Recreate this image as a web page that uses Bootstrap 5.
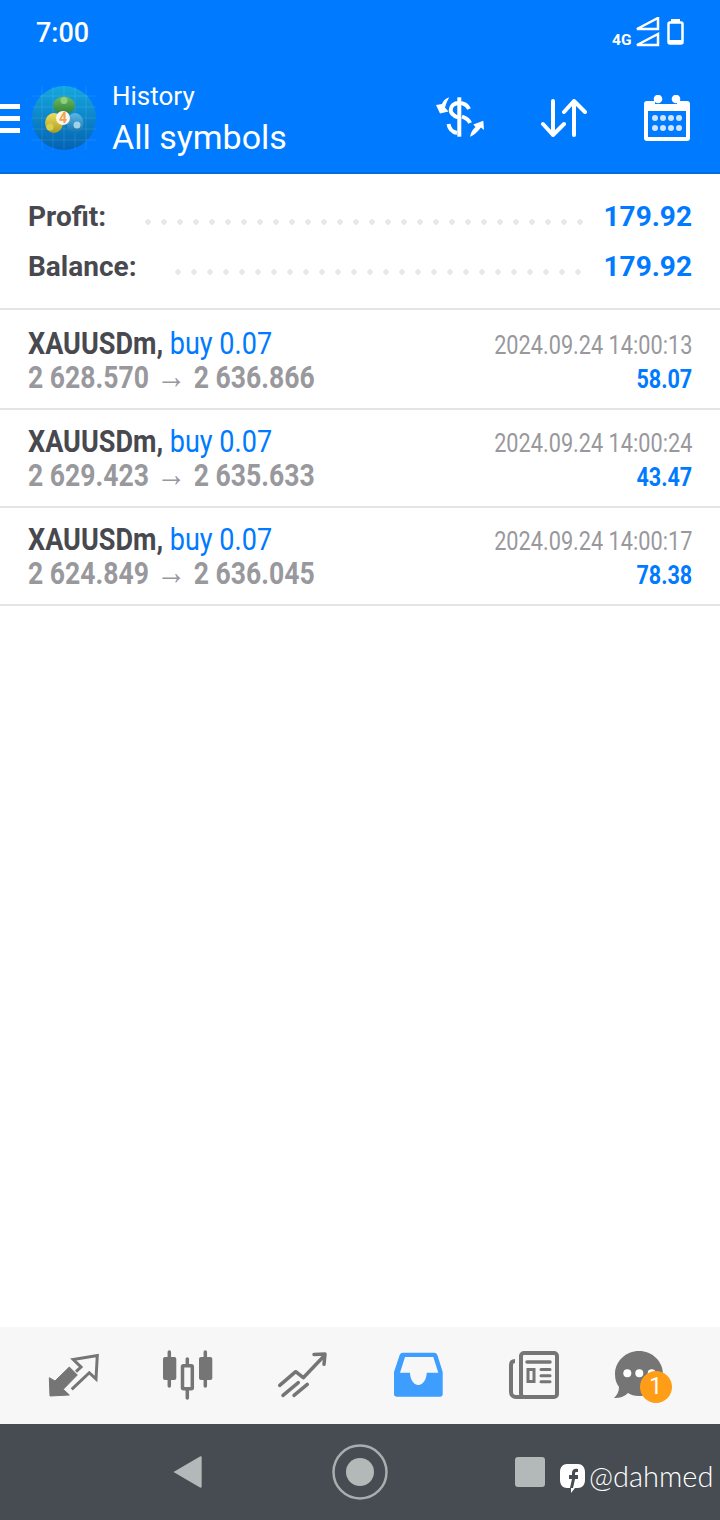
<!DOCTYPE html>
<html lang="en">
<head>
  <meta charset="UTF-8" />
  <meta name="viewport" content="width=device-width, initial-scale=1.0"/>
  <title>History</title>
  <link href="https://cdn.jsdelivr.net/npm/bootstrap@5.3.3/dist/css/bootstrap.min.css" rel="stylesheet">
  <style>
    html, body { height: 100%; }
    body {
      background: #fff;
      font-family: Roboto, "Noto Sans", sans-serif;
      color: #48484f;
      width: 720px;
      height: 1520px;
      overflow: hidden;
    }
    svg { display: block; flex: none; }
    .app-head { background: #007aff; border-bottom: 2px solid #006edc; height: 174px; color: #fff; }
    .status-row { height: 64px; padding: 0 36px 0 36px; }
    .status-time { font-size: 27px; font-weight: 500; line-height: 1; margin-top: 3px; }
    .status-icons { margin-top: 4px; }
    .tool-row { height: 108px; }
    .burger { width: 20px; margin-right: 12px; }
    .burger i { display: block; height: 5px; background: #fff; margin-bottom: 7px; }
    .burger i:last-child { margin-bottom: 0; }
    .head-titles { margin-left: 16px; margin-top: 2px; }
    .head-sub { font-size: 26px; line-height: 36px; }
    .head-main { font-size: 34px; line-height: 46px; }
    .tool-gap-1 { margin-left: 56px; }
    .tool-gap-2 { margin-left: 57px; margin-right: 30px; }

    .sum-box { height: 136px; padding: 18px 28px 0; border-bottom: 2px solid #e4e4e4; }
    .sum-line { height: 50px; font-size: 28px; font-weight: 700; }
    .sum-val { color: #007aff; font-size: 28px; font-weight: 700; }
    .dot-fill {
      height: 6px;
      margin-top: 10px;
      background: radial-gradient(circle, #e8e8e8 2.5px, transparent 3px) repeat-x;
      background-size: 16px 6px;
      margin-left: auto;
    }
    .dots-profit { width: 448px; margin-right: 16px; }
    .dots-balance { width: 416px; margin-right: 18px; }

    .deal-row { height: 98px; padding: 14px 28px 0; border-bottom: 2px solid #e4e4e4; }
    .deal-row.first { height: 100px; padding-top: 16px; }
    .deal-side { padding-top: 2px; }
    .deal-line { height: 34px; line-height: 34px; white-space: nowrap; }
    .narrow { display: inline-block; transform-origin: left center; }
    .narrow-r { display: inline-block; transform-origin: right center; }
    .deal-name { font-size: 32px; font-weight: 700; transform: scaleX(.845); }
    .deal-name b { font-weight: 700; }
    .deal-name span { color: #007aff; font-weight: 400; }
    .deal-price { font-size: 32px; font-weight: 700; color: #98989d; transform: scaleX(.83); }
    .deal-arrow { font-weight: 400; font-size: 36px; line-height: 0; margin: 0 1px; }
    .deal-date { font-size: 26px; color: #98989d; transform: scaleX(.835); }
    .deal-val { font-size: 26px; font-weight: 700; color: #007aff; transform: scaleX(.83); }

    .tab-bar { height: 97px; background: #f7f7f7; padding: 0 13px 0 15px; }
    .tab-cell { height: 97px; position: relative; }
    .chat-bubble { margin-right: 20px; }
    .chat-count {
      position: absolute; left: 48px; top: 44px;
      width: 32px; height: 32px; border-radius: 50%;
      background: #ff9d17; color: #fff;
      font-size: 23px; line-height: 32px; text-align: center;
    }
    .sys-bar { height: 96px; background: #464c52; padding-left: 172px; }
    .sys-gap-1 { margin-left: 128px; }
    .sys-gap-2 { margin-left: 125px; }
    .sys-gap-3 { margin-left: 15px; margin-top: 12px; }
    .sys-tag { color: #fff; font-family: Lato, sans-serif; font-weight: 300; font-size: 29px; margin-left: 4px; margin-top: 6px; line-height: 1; white-space: nowrap; }
  </style>
</head>
<body>
<div class="d-flex flex-column h-100">

  <!-- Header -->
  <header class="app-head">
    <div class="status-row d-flex align-items-center justify-content-between">
      <span class="status-time">7:00</span>
      <svg class="status-icons" width="72" height="34" viewBox="0 0 72 34" fill="none">
        <text x="0" y="28" font-family="Roboto" font-weight="700" font-size="15.5" fill="#fff">4G</text>
        <path d="M25 12 46 1V12Z M25 28 46 17V28Z" stroke="#fff" stroke-width="2.500"/>
        <path d="M59 2h9v3h-9z" fill="#fff"/>
        <rect x="56.500" y="5.500" width="14" height="21" rx="1.500" stroke="#fff" stroke-width="2.500"/>
        <rect x="56" y="23" width="15" height="4" fill="#fff"/>
      </svg>
    </div>
    <div class="tool-row d-flex align-items-center">
      <div class="burger"><i></i><i></i><i></i></div>
      <svg width="64" height="64" viewBox="0 0 64 64">
        <defs>
          <linearGradient id="logoBg" x1="0" y1="0" x2="0" y2="1">
            <stop offset="0" stop-color="#14a8e0"/>
            <stop offset="1" stop-color="#0462b2"/>
          </linearGradient>
          <linearGradient id="logoGreen" x1="0" y1="0" x2="0" y2="1">
            <stop offset="0" stop-color="#6dbb5e"/>
            <stop offset="1" stop-color="#2f7f3a"/>
          </linearGradient>
          <linearGradient id="logoYellow" x1="0" y1="0" x2="0" y2="1">
            <stop offset="0" stop-color="#efe05a"/>
            <stop offset="1" stop-color="#a99a22"/>
          </linearGradient>
          <linearGradient id="logoBlue" x1="0" y1="0" x2="0" y2="1">
            <stop offset="0" stop-color="#5cb7e2"/>
            <stop offset="1" stop-color="#1672ad"/>
          </linearGradient>
        </defs>
        <circle cx="32" cy="32" r="32" fill="url(#logoBg)"/>
        <path d="M10 0V64M21 0V64M32 0V64M43 0V64M54 0V64M0 10H64M0 21H64M0 32H64M0 43H64M0 54H64" stroke="#fff" stroke-opacity=".1"/>
        <ellipse cx="32" cy="19.500" rx="11" ry="9" fill="url(#logoGreen)"/>
        <circle cx="32" cy="14.500" r="3.500" fill="#8ed07c"/>
        <ellipse cx="22" cy="37" rx="9" ry="10" fill="url(#logoYellow)"/>
        <circle cx="18" cy="41" r="3.500" fill="#d9cd4a"/>
        <ellipse cx="43" cy="37" rx="8.500" ry="10" fill="url(#logoBlue)"/>
        <circle cx="45" cy="39" r="3.500" fill="#9fd3ea"/>
        <circle cx="31" cy="32" r="7" fill="#fdf6ee"/>
        <text x="31" y="37" text-anchor="middle" font-family="Roboto" font-weight="700" font-size="14" fill="#f2a24a">4</text>
      </svg>
      <div class="head-titles flex-grow-1">
        <div class="head-sub">History</div>
        <div class="head-main">All symbols</div>
      </div>
      <svg width="50" height="44" viewBox="0 0 50 44" fill="none">
        <path d="M24.300 1.300V40.700" stroke="#fff" stroke-width="4"/>
        <path d="M34 13C32 8.500 28 7 24 7 19 7 15.700 10 15.700 14 15.700 18 19 20 23 21.500" stroke="#fff" stroke-width="4"/>
        <path d="M27 20.500C31 22 34 24 35 27" stroke="#fff" stroke-width="4"/>
        <path d="M13.500 28C14 32 17 36 22 37" stroke="#fff" stroke-width="4"/>
        <path d="M14.300 1.300C10 3 8 5 7 8L1 9 5 17.500 13.500 15.500 10 11.500C11 8 12 5 14.300 1.300Z" fill="#fff"/>
        <path d="M35 40.700C36 36 38 33 40.500 31L38.300 28.500 48.300 24.700 49 34 46 31.500C43 35 40 39 35 40.700Z" fill="#fff"/>
      </svg>
      <svg class="tool-gap-1" width="46" height="40" viewBox="0 0 46 40" fill="none" stroke="#fff" stroke-width="4" stroke-linecap="round" stroke-linejoin="round">
        <path d="M12 3V37M2 26 12 37 23 26"/>
        <path d="M33 37V3M23 14 33 3 44 14"/>
      </svg>
      <svg class="tool-gap-2" width="46" height="46" viewBox="0 0 46 46">
        <path d="M3 6H11V9H33V6H43A3 3 0 0 1 46 9V43A3 3 0 0 1 43 46H3A3 3 0 0 1 0 43V9A3 3 0 0 1 3 6Z" fill="#fff"/>
        <circle cx="14" cy="4" r="4.300" fill="#fff"/>
        <circle cx="32" cy="4" r="4.300" fill="#fff"/>
        <rect x="4" y="16" width="38" height="26" fill="#007aff"/>
        <g fill="#cfe4ff">
          <circle cx="11" cy="23" r="3"/><circle cx="19" cy="23" r="3"/><circle cx="27" cy="23" r="3"/><circle cx="35" cy="23" r="3"/>
          <circle cx="11" cy="33" r="3"/><circle cx="19" cy="33" r="3"/><circle cx="27" cy="33" r="3"/><circle cx="35" cy="33" r="3"/>
        </g>
      </svg>
    </div>
  </header>

  <!-- Summary -->
  <section class="sum-box">
    <div class="sum-line d-flex align-items-center">
      <span>Profit:</span><span class="dot-fill dots-profit"></span><span class="sum-val">179.92</span>
    </div>
    <div class="sum-line d-flex align-items-center">
      <span>Balance:</span><span class="dot-fill dots-balance"></span><span class="sum-val">179.92</span>
    </div>
  </section>

  <!-- Deals -->
  <main class="flex-grow-1">
    <div class="deal-row first d-flex justify-content-between">
      <div>
        <div class="deal-line"><span class="narrow deal-name"><b>XAUUSDm,</b> <span>buy 0.07</span></span></div>
        <div class="deal-line"><span class="narrow deal-price">2 628.570 <span class="deal-arrow">→</span> 2 636.866</span></div>
      </div>
      <div class="text-end deal-side">
        <div class="deal-line"><span class="narrow-r deal-date">2024.09.24 14:00:13</span></div>
        <div class="deal-line"><span class="narrow-r deal-val">58.07</span></div>
      </div>
    </div>
    <div class="deal-row d-flex justify-content-between">
      <div>
        <div class="deal-line"><span class="narrow deal-name"><b>XAUUSDm,</b> <span>buy 0.07</span></span></div>
        <div class="deal-line"><span class="narrow deal-price">2 629.423 <span class="deal-arrow">→</span> 2 635.633</span></div>
      </div>
      <div class="text-end deal-side">
        <div class="deal-line"><span class="narrow-r deal-date">2024.09.24 14:00:24</span></div>
        <div class="deal-line"><span class="narrow-r deal-val">43.47</span></div>
      </div>
    </div>
    <div class="deal-row d-flex justify-content-between">
      <div>
        <div class="deal-line"><span class="narrow deal-name"><b>XAUUSDm,</b> <span>buy 0.07</span></span></div>
        <div class="deal-line"><span class="narrow deal-price">2 624.849 <span class="deal-arrow">→</span> 2 636.045</span></div>
      </div>
      <div class="text-end deal-side">
        <div class="deal-line"><span class="narrow-r deal-date">2024.09.24 14:00:17</span></div>
        <div class="deal-line"><span class="narrow-r deal-val">78.38</span></div>
      </div>
    </div>
  </main>

  <!-- Bottom tabs -->
  <nav class="tab-bar row g-0">
    <div class="col-2 tab-cell d-flex align-items-center justify-content-center">
      <svg width="60" height="60" viewBox="0 0 60 60" fill="none">
        <path d="M7 50 6.300 31.700 12 35 26.300 21 34.300 29 20.300 43.300 26.300 49Z" fill="#757575" stroke="#757575" stroke-linejoin="round"/>
        <path d="M33 25.700 38 21 30.300 13.500 54.300 9.500 53 33 46.300 26.700 28.700 43.300" stroke="#757575" stroke-width="3"/>
      </svg>
    </div>
    <div class="col-2 tab-cell d-flex align-items-center justify-content-center">
      <svg width="60" height="60" viewBox="0 0 60 60" fill="none">
        <g stroke="#757575" stroke-width="3.500" stroke-linecap="round">
          <path d="M11.300 6V40M29.300 13V52M47.300 6V40"/>
        </g>
        <rect x="5" y="11" width="13.300" height="23" rx="2" fill="#757575"/>
        <rect x="41" y="11" width="13.300" height="23" rx="2" fill="#757575"/>
        <rect x="24.500" y="19.800" width="9.800" height="23" rx="1" fill="#f7f7f7" stroke="#757575" stroke-width="3.500"/>
      </svg>
    </div>
    <div class="col-2 tab-cell d-flex align-items-center justify-content-center">
      <svg width="60" height="60" viewBox="0 0 60 60" fill="none" stroke="#757575" stroke-width="3.500" stroke-linecap="round" stroke-linejoin="round">
        <path d="M6.700 39.300 22.700 25.700 30.300 31.700 51 10"/>
        <path d="M41 8.500 52 8 51 18.300"/>
        <path d="M10 49.300 25.300 36.700M21 49.300 34.300 38.300"/>
      </svg>
    </div>
    <div class="col-2 tab-cell d-flex align-items-center justify-content-center">
      <svg width="60" height="60" viewBox="0 0 60 60">
        <path d="M14 6.700H45C47 6.700 48 8 48.500 9.500L53.700 26V48C53.700 49.700 52.700 50.700 51 50.700H8C6 50.700 5 49.700 5 48V26L10.500 9.500C11 8 12 6.700 14 6.700Z" fill="#3d9eff"/>
        <path d="M16 11H44.300L49.300 26.700H37.700C37.700 33 34 39 29.300 39 24.700 39 21 33 21 26.700H11Z" fill="#f7f7f7"/>
      </svg>
    </div>
    <div class="col-2 tab-cell d-flex align-items-center justify-content-center">
      <svg width="60" height="60" viewBox="0 0 60 60" fill="none" stroke="#757575">
        <rect x="17" y="7" width="36" height="44" rx="3" stroke-width="4"/>
        <path d="M11 15C8 15 7 17 7 19V46C7 49 9 51 12 51H19" stroke-width="4"/>
        <path d="M23 16H46" stroke-width="3.500" stroke-linecap="round"/>
        <rect x="24" y="23.500" width="6" height="12" stroke-width="3"/>
        <path d="M37 23.500H46M37 29.700H46M37 35.700H46" stroke-width="3" stroke-linecap="round"/>
      </svg>
    </div>
    <div class="col-2 tab-cell d-flex align-items-center justify-content-center">
      <svg class="chat-bubble" width="60" height="60" viewBox="0 0 60 60">
        <path d="M30 5C43 5 54 15 54 28 54 41 43 50 30 50 25 50 22 49 19 47 15 51 11 52 5 52 8 49 10 46 10 41 7 37 6 33 6 28 6 15 17 5 30 5Z" fill="#757575"/>
        <circle cx="18.300" cy="27.300" r="4" fill="#fff"/>
        <circle cx="30.300" cy="27.300" r="4" fill="#fff"/>
        <circle cx="42.700" cy="27.300" r="4" fill="#fff"/>
      </svg>
      <span class="chat-count">1</span>
    </div>
  </nav>

  <!-- Android nav bar -->
  <footer class="sys-bar d-flex align-items-center">
    <svg width="30" height="34" viewBox="0 0 30 34">
      <path d="M1.500 17 28 1.500C29 1 29.700 1.700 29.700 2.500V31.500C29.700 32.300 29 33 28 32.500Z" fill="#b3b8b9"/>
    </svg>
    <svg class="sys-gap-1" width="60" height="60" viewBox="0 0 60 60" fill="none">
      <circle cx="30" cy="30" r="26.500" stroke="#a9adae" stroke-width="2.500"/>
      <circle cx="30" cy="30" r="14" fill="#b3b8b9"/>
    </svg>
    <svg class="sys-gap-2" width="30" height="30" viewBox="0 0 30 30">
      <rect width="30" height="30" rx="3" fill="#b3b8b9"/>
    </svg>
    <svg class="sys-gap-3" width="25" height="29" viewBox="0 0 25 29">
      <path d="M7 0H18C22 0 25 3 25 8V16C25 21 22 24 18 24H15L11 29V24H7C3 24 0 21 0 16V8C0 3 3 0 7 0Z" fill="#fff"/>
      <path d="M18 5C14 4 12 6 12 9V11H9V15H12L10 24H13L15 15H18V11H15V9C15 8 16 8 18 8Z" fill="#464c52"/>
    </svg>
    <span class="sys-tag">@dahmed</span>
  </footer>
</div>
<script src="https://cdn.jsdelivr.net/npm/bootstrap@5.3.3/dist/js/bootstrap.bundle.min.js"></script>
</body>
</html>
